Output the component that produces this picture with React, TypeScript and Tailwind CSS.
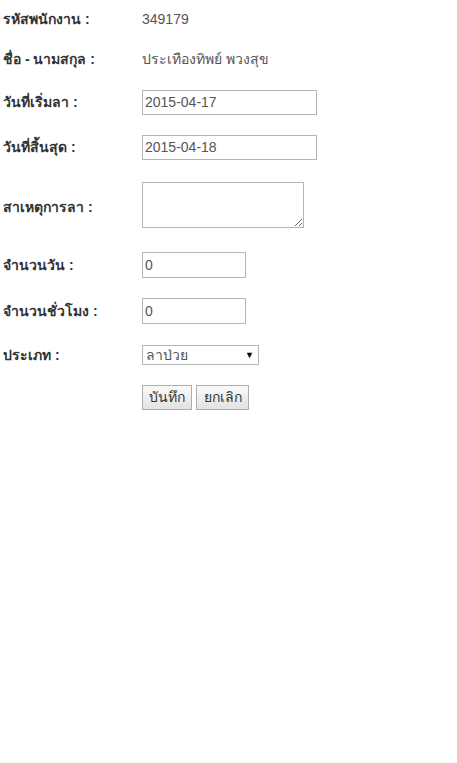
import React from "react";

const labelCls = "w-[142px] shrink-0 pl-[3px] font-bold text-[14px] text-[#333]";
const inputCls =
   "h-[25px] border border-[#b5b5b5] bg-white px-[2px] text-[14px] text-[#555] outline-none";

const App: React.FC = (): JSX.Element => (
   <div
      className="min-h-[763px] w-full bg-white"
      style={{ fontFamily: '"Liberation Sans", Tahoma, "Noto Sans", sans-serif' }}
   >
      <form className="flex flex-col" onSubmit={(e) => e.preventDefault()}>
         <div className="flex h-[38px] items-center">
            <span className={labelCls}>รหัสพนักงาน :</span>
            <span className="text-[14px] text-[#555]">349179</span>
         </div>
         <div className="flex h-[42px] items-center">
            <span className={labelCls}>ชื่อ - นามสกุล :</span>
            <span className="text-[14px] text-[#555]">ประเทืองทิพย์ พวงสุข</span>
         </div>
         <div className="flex h-[44px] items-center">
            <span className={labelCls}>วันที่เริ่มลา :</span>
            <input className={`${inputCls} w-[175px]`} defaultValue="2015-04-17" />
         </div>
         <div className="flex h-[46px] items-center">
            <span className={labelCls}>วันที่สิ้นสุด :</span>
            <input className={`${inputCls} w-[175px]`} defaultValue="2015-04-18" />
         </div>
         <div className="flex h-[69px] items-center">
            <span className={`${labelCls} pt-[6px]`}>สาเหตุการลา :</span>
            <textarea className="h-[46px] w-[162px] resize border border-[#b5b5b5] bg-white text-[14px] text-[#555] outline-none" />
         </div>
         <div className="flex h-[52px] items-center">
            <span className={labelCls}>จำนวนวัน :</span>
            <input className={`${inputCls} h-[26px] w-[104px]`} defaultValue="0" />
         </div>
         <div className="flex h-[40px] items-center">
            <span className={labelCls}>จำนวนชั่วโมง :</span>
            <input className={`${inputCls} h-[26px] w-[104px]`} defaultValue="0" />
         </div>
         <div className="flex h-[48px] items-center">
            <span className={labelCls}>ประเภท :</span>
            <div className="relative h-[20px] w-[117px] border border-[#b5b5b5] bg-white">
               <span className="absolute left-[3px] top-[1px] text-[14px] leading-[17px] text-[#555]">
                  ลาป่วย
               </span>
               <span className="absolute right-[4px] top-[2px] text-[9px] leading-[14px] text-black">▼</span>
            </div>
         </div>
         <div className="flex h-[37px] items-center">
            <span className="w-[142px] shrink-0" />
            <div className="flex gap-[4px]">
               <button
                  type="submit"
                  className="h-[25px] w-[50px] border border-[#adadad] bg-gradient-to-b from-[#fafafa] to-[#e2e2e2] text-[14px] text-[#333]"
               >
                  บันทึก
               </button>
               <button
                  type="button"
                  className="h-[25px] w-[53px] border border-[#adadad] bg-gradient-to-b from-[#fafafa] to-[#e2e2e2] text-[14px] text-[#333]"
               >
                  ยกเลิก
               </button>
            </div>
         </div>
      </form>
   </div>
);

export default App;
